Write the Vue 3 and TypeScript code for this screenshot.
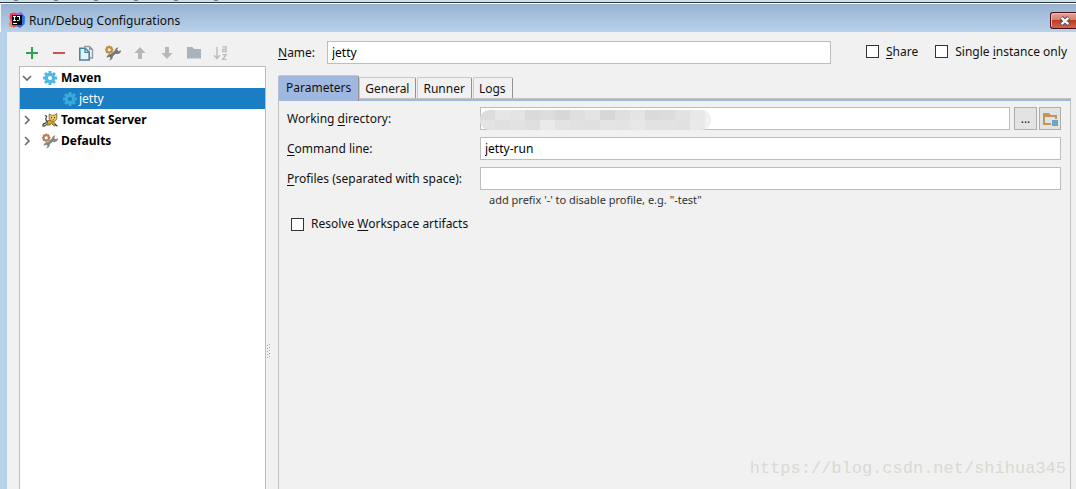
<script setup lang="ts">
import { ref } from 'vue'

interface TreeRow {
  label: string
  icon: 'gear' | 'cat' | 'tools'
  arrow: '' | 'open' | 'closed'
}

const rows: TreeRow[] = [
  { label: 'Maven', icon: 'gear', arrow: 'open' },
  { label: 'jetty', icon: 'gear', arrow: '' },
  { label: 'Tomcat Server', icon: 'cat', arrow: 'closed' },
  { label: 'Defaults', icon: 'tools', arrow: 'closed' },
]
const selected = ref('jetty')

const tabs = ['Parameters', 'General', 'Runner', 'Logs']
const activeTab = ref('Parameters')

const name = ref('jetty')
const directory = ref('')
const command = ref('jetty-run')
const profiles = ref('')
const share = ref(false)
const single = ref(false)
const resolve = ref(false)

const mosaic: string[] = [
  '#dcdcdc', '#e6e6e6', '#e4e4e4', '#dadada', '#dddddd', '#d7d7d7', '#dfdfdf', '#e4e4e4',
  '#d7d7d7', '#dfdfdf', '#e4e4e4', '#dadada', '#dcdcdc', '#e2e2e2', '#e8e8e8', '#f0f0f0',
  '#e4e4e4', '#e0e0e0', '#e2e2e2', '#dfdfdf', '#eaeaea', '#e3e3e3', '#e1e1e1', '#e0e0e0',
  '#e4e4e4', '#e3e3e3', '#e7e7e7', '#e2e2e2', '#e2e2e2', '#e1e1e1', '#e9e9e9', '#f1f1f1',
]
</script>

<template>
  <div class="window">
    <svg class="defs" aria-hidden="true">
      <symbol id="gear" viewBox="0 0 14 14">
        <g fill="currentColor">
          <rect v-for="a in [0, 45, 90, 135]" :key="a" x="5.5" y="0" width="3" height="14" :transform="`rotate(${a} 7 7)`" />
        </g>
        <circle cx="7" cy="7" r="3.6" fill="none" stroke="currentColor" stroke-width="3.2" />
        <circle cx="7" cy="7" r="2.1" fill="var(--hole)" />
      </symbol>
      <symbol id="tools" viewBox="0 0 16 16">
        <path d="M5.600 11.200L11.800 5.800" stroke="var(--wrench)" stroke-width="3" />
        <path d="M10 7.400C9.200 4.800 10.800 2.400 13.400 2.200L12.200 4.800 13.600 6.200 16 5.200C16.200 8.200 13.200 9.800 10.800 8.800z" fill="var(--wrench)" />
        <path d="M7.600 9.600C8.600 12.400 7 15.200 4.200 15.600L5.600 13 4.400 11.800 1.600 12.800C1.600 9.800 4.600 8.400 7 9.200z" fill="var(--wrench)" />
        <circle cx="4.200" cy="4.800" r="2.700" fill="none" stroke="var(--ring)" stroke-width="2.200" />
        <path d="M4.200 .6v1.500M4.200 7.400v1.600M0 4.800h1.500M7 4.800h1.500M1.200 1.800l1 1M7.200 1.800l-1 1M1.200 7.800l1-1M7.200 7.800l-1-1" stroke="var(--ring)" stroke-width="1.400" />
      </symbol>
      <symbol id="cat" viewBox="0 0 16 16">
        <path d="M5 9.500C7 7.400 9.400 8 11 9.400L14 12.600 12.500 14 9.500 11.600 7.400 13H3.800L5 11.600z" fill="#dda32f" stroke="#332b1c" stroke-width=".7" />
        <path d="M7.200 2L9.200 3.200h3.400L14.800 1.600V6.800L12.800 9.200H9.400L7.200 6.800z" fill="#f2cf62" stroke="#54431d" stroke-width=".7" />
        <path d="M5.600 9.800C4 8.600 3 7 4.600 5.200M5.200 4.400L2.800 3.600M4.400 10.600L1 12.400V14.400M3.600 13.200L1.600 14.600M13 12.400l2.400 1.800" fill="none" stroke="#2c2820" stroke-width="1.100" />
        <path d="M9 5h1v1.200H9zM12 5h1v1.200h-1zM10.600 7.200h1v.8h-1z" fill="#3b2c12" />
      </symbol>
    </svg>

    <div class="backdrop"><i></i><i></i><i></i><i></i><i></i><i></i></div>
    <header class="titlebar">
      <svg class="logo" width="16" height="16" viewBox="0 0 16 16">
        <path d="M1 1.500L6 .4 8 2v12L5 15.600 0 13.800 1.800 10 .4 6z" fill="#f8375f" />
        <path d="M0 10l3-1 1 6-4-1.200z" fill="#f48b42" />
        <path d="M7 1.600L12 .2 16 4.400 15.600 12 11 16 7 14z" fill="#2a70e8" />
        <path d="M7 1.600L12 .2 13 4H7z" fill="#b95fc6" />
        <rect x="3" y="3" width="10" height="10" fill="#080808" />
        <path d="M4 4.500h3M5.500 4.500v4M4 8.500h3M8 4.500h3M10.500 4.500v3q0 1-1 1H8M4 11.500h4" fill="none" stroke="#fff" stroke-width="1" />
      </svg>
      <h1>Run/Debug Configurations</h1>
      <button class="close" aria-label="Close">
        <svg width="12" height="10" viewBox="0 0 12 10">
          <path d="M2.400 1.600L9.600 8.400M9.600 1.600L2.400 8.400" stroke="#4d4a5c" stroke-width="4.200" />
          <path d="M2.600 1.800L9.400 8.200M9.400 1.800L2.600 8.200" stroke="#f6f6f6" stroke-width="2.400" />
        </svg>
      </button>
    </header>

    <div class="body">
      <aside>
        <div class="toolbar">
          <button aria-label="Add"><svg viewBox="0 0 16 16"><path d="M8 2v12M2 8h12" stroke="#2ba44e" stroke-width="2" /></svg></button>
          <button aria-label="Remove"><svg viewBox="0 0 16 16"><path d="M2 8h12" stroke="#c75450" stroke-width="2" /></svg></button>
          <button aria-label="Copy">
            <svg viewBox="0 0 16 16">
              <path d="M6 1.500h5.500l3 3V13H12" fill="none" stroke="#939b9f" stroke-width="1.400" />
              <path d="M11 1v4h4z" fill="#939b9f" />
              <path d="M1.800 3.200h5.400l4 4V15H1.800z" fill="#e9f1f5" stroke="#4385ab" stroke-width="1.600" />
              <path d="M7 3v4.400h4.400" fill="none" stroke="#4385ab" stroke-width="1.400" />
            </svg>
          </button>
          <button aria-label="Edit defaults" class="tools-dark"><svg><use href="#tools" /></svg></button>
          <button aria-label="Move up"><svg viewBox="0 0 16 16"><path d="M8 2L13.600 8H10v6H6V8H2.400z" fill="#b7b7b7" /></svg></button>
          <button aria-label="Move down"><svg viewBox="0 0 16 16"><path d="M8 14L2.400 8H6V2h4v6h3.600z" fill="#b7b7b7" /></svg></button>
          <button aria-label="New folder"><svg viewBox="0 0 16 16"><path d="M1 2h5.400l1.800 2H15v9.500H1z" fill="#a8b4ba" /></svg></button>
          <button aria-label="Sort">
            <svg viewBox="0 0 16 16">
              <path d="M4 2v11M1 10.200l3 3.200 3-3.200" fill="none" stroke="#bbb" stroke-width="1.400" />
              <path d="M9.500 1.800h3.600v5.400M13 4.400H9.800v2.300H13M9.400 9.700h3.800L9.600 14.300h4" fill="none" stroke="#bbb" stroke-width="1.300" />
            </svg>
          </button>
        </div>
        <ul class="tree">
          <li v-for="r in rows" :key="r.label">
            <button :class="['row', { selected: selected === r.label, leaf: !r.arrow }]" @click="selected = r.label">
              <svg v-if="r.arrow" class="arrow" width="10" height="10" viewBox="0 0 10 10">
                <path :d="r.arrow === 'open' ? 'M1 3l4 4 4-4' : 'M3 1l4 4-4 4'" fill="none" stroke="#6a6a6a" stroke-width="1.600" />
              </svg>
              <svg :class="['node', r.icon]"><use :href="'#' + r.icon" /></svg>
              <span>{{ r.label }}</span>
            </button>
          </li>
        </ul>
      </aside>

      <div class="splitter">
        <svg width="5" height="15" viewBox="0 0 5 15" fill="#a8a8a8">
          <template v-for="n in 5" :key="n">
            <rect x="1" :y="n * 3 - 2" width="1" height="1" />
            <rect x="3" :y="n * 3 - 3" width="1" height="1" />
          </template>
        </svg>
      </div>

      <main>
        <div class="namebar">
          <label for="name"><u>N</u>ame:</label>
          <input id="name" v-model="name" type="text" />
          <span class="checks">
            <label class="check"><input v-model="share" type="checkbox" /><span><u>S</u>hare</span></label>
            <label class="check"><input v-model="single" type="checkbox" /><span>Single <u>i</u>nstance only</span></label>
          </span>
        </div>

        <div class="tabs" role="tablist">
          <button v-for="t in tabs" :key="t" role="tab" :aria-selected="activeTab === t" :class="{ active: activeTab === t }" @click="activeTab = t">{{ t }}</button>
        </div>

        <section class="panel">
          <div class="form">
            <label for="dir">Working <u>d</u>irectory:</label>
            <div class="dir">
              <div class="masked">
                <input id="dir" v-model="directory" type="text" />
                <div class="mosaic"><i v-for="(c, i) in mosaic" :key="i" :style="{ background: c }"></i></div>
              </div>
              <button class="more">...</button>
              <button class="browse" aria-label="Choose directory">
                <svg width="16" height="14" viewBox="0 0 16 14">
                  <path d="M1 1h6l2 2h6v4h-2V5H3v6h6v2H1z" fill="#c2965a" />
                  <rect x="10" y="8" width="6" height="6" fill="#6ba5c8" />
                </svg>
              </button>
            </div>
            <label for="cmd"><u>C</u>ommand line:</label>
            <input id="cmd" v-model="command" type="text" />
            <label for="prof"><u>P</u>rofiles (separated with space):</label>
            <input id="prof" v-model="profiles" type="text" />
          </div>
          <p class="hint">add prefix '-' to disable profile, e.g. "-test"</p>
          <label class="check resolve"><input v-model="resolve" type="checkbox" /><span>Resolve <u>W</u>orkspace artifacts</span></label>
          <p class="watermark">https://blog.csdn.net/shihua345</p>
        </section>
      </main>
    </div>
  </div>
</template>

<style>
body { margin: 0; }
</style>

<style scoped>
* { box-sizing: border-box; }
.window {
  min-height: 100vh;
  display: flex;
  flex-direction: column;
  overflow: hidden;
  background: #b9d1ea;
  color: #111;
  font: 12px/18px "Noto Sans", "Open Sans", sans-serif;
}
.defs { position: absolute; width: 0; height: 0; }
button { font: inherit; color: inherit; padding: 0; border: 0; background: none; }
u { text-underline-offset: 2px; }
.backdrop {
  height: 4px;
  display: flex;
  gap: 36px;
  padding-left: 14px;
  background: #cfdfeb;
  border-bottom: 1px solid #fff;
  box-shadow: inset 0 -1px #30383f;
}
.backdrop i { width: 4px; height: 1px; background: #777f9b; }
.titlebar {
  height: 28px;
  display: flex;
  align-items: center;
  padding-left: 8px;
  border-left: 1px solid #eef5fb;
  background: linear-gradient(#98b3d0, #b9d1ea);
}
h1 { margin: 0 auto 0 4px; padding-top: 6px; font-size: 12px; font-weight: 400; line-height: 18px; }
.logo { margin-top: 4px; }
.close {
  width: 26px;
  height: 17px;
  margin-top: 5px;
  padding-left: 3px;
  display: flex;
  align-items: center;
  justify-content: center;
  border: 1px solid #48111c;
  border-right: 0;
  border-radius: 3px 0 0 3px;
  background: linear-gradient(#e3a397 0, #d5806f 46%, #b93b22 50%, #cf6650 100%);
  box-shadow: inset 1px 1px #efb8ac;
}
.body {
  flex: 1;
  display: flex;
  margin-left: 7px;
  background: #f1f1f1;
}
aside { width: 259px; padding-left: 12px; display: flex; flex-direction: column; }
.toolbar { display: flex; gap: 11px; height: 34px; padding: 13px 0 0 5px; }
.toolbar svg { display: block; width: 16px; height: 16px; }
.toolbar button { height: 16px; }
.tools-dark { --wrench: #777; --ring: #c98b3c; }
.tree {
  flex: 1;
  margin: 0;
  padding: 0;
  list-style: none;
  border: 1px solid #bdbdbd;
  border-bottom: 0;
  background: #fff;
}
.row {
  width: 100%;
  height: 21px;
  display: flex;
  align-items: center;
  padding-left: 2px;
  font-weight: 700;
  color: #000;
  text-align: left;
}
.row.leaf { padding-left: 42px; font-weight: 400; }
.row.selected { background: #1b7dc4; color: #fff; }
.arrow { margin-right: 10px; }
.node { width: 16px; height: 16px; margin-right: 3px; --wrench: #888; --ring: #b98257; }
.node.gear { padding: 1px; color: #4db8e5; --hole: #fff; }
.selected .node.gear { color: #38aadc; --hole: #1b7dc4; margin-right: 1px; }
.splitter { width: 12px; display: flex; align-items: center; }
.splitter svg { margin-top: 181px; }
main { flex: 1; min-width: 0; display: flex; flex-direction: column; padding-right: 5px; }
.namebar { display: flex; align-items: center; padding: 9px 4px 0 0; }
.namebar > label { width: 49px; }
#name { flex: 1; }
input[type="text"] {
  display: block;
  width: 100%;
  min-width: 0;
  height: 23px;
  margin: 0;
  padding: 0 4px;
  border: 1px solid #bdbdbd;
  border-radius: 0;
  outline: 0;
  background: #fff;
  color: #000;
  font: inherit;
}
.checks { display: flex; gap: 17px; margin-left: 35px; padding-bottom: 2px; white-space: nowrap; }
.check { display: flex; align-items: center; gap: 7px; }
.check input {
  appearance: none;
  width: 13px;
  height: 13px;
  margin: 0;
  border: 1px solid #333;
  background: #fff;
}
.tabs { display: flex; align-items: flex-end; height: 26px; margin-top: 11px; padding-bottom: 3px; box-shadow: inset 0 -2px #a0b8e0, inset 0 -3px #c3c3c3; }
.tabs button {
  height: 21px;
  margin-right: 1px;
  padding: 1px 6px 0 5px;
  border: 1px solid #c8c8c8;
  border-right: 1px solid #929292;
  border-bottom: 0;
  border-radius: 2px 2px 0 0;
}
.tabs button.active { height: 26px; margin: 0 0 -3px; padding: 0 7px 2px; background: #a0b8e0; border-left-color: #b3bfd2; }
.panel {
  flex: 1;
  position: relative;
  padding: 6px 9px 0 8px;
  border: 1px solid #c3c3c3;
  border-width: 0 1px;
}
.form { display: grid; grid-template-columns: 193px 1fr; row-gap: 7px; align-items: center; }
.dir { display: flex; }
.masked { position: relative; flex: 1; }
.mosaic {
  position: absolute;
  left: 0;
  top: 3px;
  width: 231px;
  height: 20px;
  overflow: hidden;
  display: grid;
  grid-template-columns: repeat(16, 15px);
  border-radius: 9px;
}
.more, .browse { border: 1px solid #adadad; background: #e3e3e3; height: 23px; }
.more { width: 23px; margin-left: 4px; }
.browse { width: 22px; margin-left: 2px; display: flex; align-items: center; justify-content: center; }
.hint { margin: 1px 0 0 202px; font-size: 11px; color: #333; }
.resolve { width: max-content; margin: 6px 0 0 4px; }
.watermark {
  position: absolute;
  right: 4px;
  bottom: 8px;
  margin: 0;
  color: #d9d9d3;
  font: 17px/24px "Liberation Mono", monospace;
}
</style>
